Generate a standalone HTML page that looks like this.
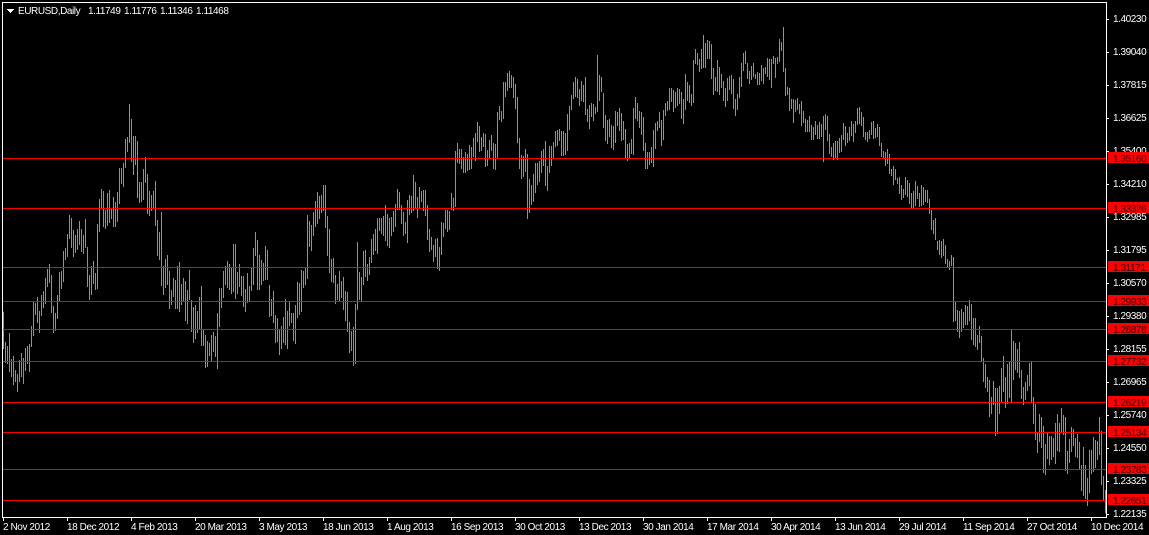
<!DOCTYPE html>
<html>
<head>
<meta charset="utf-8">
<title>EURUSD,Daily</title>
<style>
html,body{margin:0;padding:0;background:#000;width:1149px;height:535px;overflow:hidden}
svg{display:block;position:absolute;left:0;top:0}
text{font-family:"Liberation Sans",sans-serif;font-size:10px;letter-spacing:-.42px;fill:#fff}
.b{fill:none;stroke:#1fe31f;stroke-width:1;shape-rendering:crispEdges}
.r{fill:#f00;shape-rendering:crispEdges}
.w{fill:#fff;shape-rendering:crispEdges}
.t{fill:#3a0000}
</style>
</head>
<body>
<svg width="1149" height="535" viewBox="0 0 1149 535" xmlns="http://www.w3.org/2000/svg">
<rect width="1149" height="535" fill="#000"/>
<g class="b" transform="matrix(1 0 0 .33333 0 95)"><path d="M3.5 650V762M5.5 741V804M7.5 753V807M9.5 714V831M11.5 792V846M13.5 783V870M15.5 825V861M17.5 837V891M19.5 795V861M21.5 774V846M23.5 789V867M25.5 759V828M27.5 753V807M29.5 747V831M31.5 693V756M33.5 621V723M35.5 624V660M37.5 606V684M39.5 648V714M41.5 600V663M43.5 588V639M45.5 549V627M47.5 522V576M49.5 507V564M51.5 540V654M53.5 633V714M55.5 654V708M57.5 600V672M59.5 531V618M61.5 528V582M63.5 468V561M65.5 459V495M67.5 417V486M69.5 360V432M71.5 369V459M73.5 405V486M75.5 420V474M77.5 402V465M79.5 378V450M81.5 402V471M83.5 420V477M85.5 372V459M87.5 456V576M89.5 540V615M91.5 513V600M93.5 498V567M95.5 534V585M97.5 387V582M99.5 312V411M101.5 282V339M103.5 288V396M105.5 345V402M107.5 294V393M109.5 285V384M111.5 339V372M113.5 306V396M115.5 321V396M117.5 291V381M119.5 219V327M121.5 219V267M123.5 204V276M125.5 132V219M127.5 126V171M129.5 27V144M131.5 72V201M133.5 123V240M135.5 123V210M137.5 138V309M139.5 261V324M141.5 261V321M143.5 222V315M145.5 186V264M147.5 237V357M149.5 288V363M151.5 300V348M153.5 288V342M155.5 258V393M157.5 375V483M159.5 411V495M161.5 351V573M163.5 513V600M165.5 492V579M167.5 480V570M169.5 528V642M171.5 585V630M173.5 549V606M175.5 555V642M177.5 513V642M179.5 501V651M181.5 567V630M183.5 549V621"/></g>
<g class="b" transform="matrix(1 0 0 .33333 0 175)"><path d="M185.5 318V438M187.5 345V447M189.5 285V375M191.5 375V471M193.5 396V504M195.5 390V492M197.5 408V474M199.5 366V465M201.5 333V513M203.5 462V513M205.5 480V579M207.5 498V576M209.5 504V543M211.5 480V561M213.5 471V531M215.5 483V546M217.5 414V582M219.5 339V456M221.5 339V399M223.5 288V369M225.5 273V330M227.5 258V339M229.5 267V345M231.5 276V357M233.5 207V351M235.5 207V372M237.5 291V357M239.5 267V336M241.5 303V363M243.5 303V396M245.5 342V411M247.5 294V384M249.5 333V381M251.5 276V348M253.5 219V330M255.5 171V243M257.5 195V345M259.5 240V345M261.5 255V330M263.5 264V318M265.5 213V315M267.5 225V315M269.5 330V426M271.5 372V423M273.5 348V444M275.5 420V504M277.5 429V501M279.5 462V540M281.5 453V522M283.5 426V504M285.5 372V510M287.5 408V522M289.5 378V453M291.5 414V444M293.5 414V498M295.5 390V507M297.5 321V429M299.5 324V420M301.5 285V411M303.5 288V339M305.5 279V330M307.5 120V312M309.5 138V216M311.5 150V228M313.5 111V183M315.5 78V156M317.5 51V147M319.5 63V132M321.5 60V114M323.5 30V108M325.5 30V159M327.5 123V243M329.5 162V294M331.5 252V321M333.5 249V324M335.5 300V387M337.5 327V375M339.5 288V381M341.5 318V369M343.5 306V405M345.5 348V438M347.5 351V471M349.5 441V534M351.5 468V528M353.5 456V573M355.5 387V567M357.5 201V405M359.5 291V375M361.5 306V378M363.5 228V330M365.5 225V306M367.5 267V318M369.5 246V300"/></g>
<g class="b" transform="matrix(1 0 0 .33333 0 60)"><path d="M371.5 537V609M373.5 522V585M375.5 507V573M377.5 474V582M379.5 474V513M381.5 474V522M383.5 468V528M385.5 435V543M387.5 462V558M389.5 474V564M391.5 471V528M393.5 453V516M395.5 432V501M397.5 387V450M399.5 396V450M401.5 435V492M403.5 456V528M405.5 486V522M407.5 420V549M409.5 405V465M411.5 408V459M413.5 345V453M415.5 366V447M417.5 411V474M419.5 381V447M421.5 393V426M423.5 390V453M425.5 390V468M427.5 435V540M429.5 507V576M431.5 531V570M433.5 555V606M435.5 537V591M437.5 534V627M439.5 561V633M441.5 486V585M443.5 489V531M445.5 450V507M447.5 450V516M449.5 453V510M451.5 399V450M453.5 414V453M455.5 273V441M457.5 249V309M459.5 267V312M461.5 267V327M463.5 291V339M465.5 276V339M467.5 282V333M469.5 255V330M471.5 261V327M473.5 234V291M475.5 219V303M477.5 186V246M479.5 198V276M481.5 231V273M483.5 219V261M485.5 222V321M487.5 270V318M489.5 240V294M491.5 225V273M493.5 249V327M495.5 252V330M497.5 156V297M499.5 138V180M501.5 153V186M503.5 66V177M505.5 66V111M507.5 39V93M509.5 33V84M511.5 45V84M513.5 51V114M515.5 72V147M517.5 111V249M519.5 234V327M521.5 285V357M523.5 288V351M525.5 267V336M527.5 282V477M529.5 357V459M531.5 375V435M533.5 342V426M535.5 309V399M537.5 309V375M539.5 303V366M541.5 273V339M543.5 267V318M545.5 243V378M547.5 318V393M549.5 258V339M551.5 258V318M553.5 246V297"/></g>
<g class="b" transform="matrix(1 0 0 .33333 0 30)"><path d="M555.5 303V351M557.5 300V348M559.5 297V333M561.5 303V378M563.5 303V378M565.5 309V375M567.5 252V363M569.5 228V300M571.5 195V240M573.5 156V207M575.5 141V201M577.5 147V204M579.5 177V228M581.5 153V213M583.5 165V216M585.5 141V255M587.5 237V276M589.5 225V297M591.5 219V261M593.5 222V273M595.5 231V252M597.5 75V246M599.5 135V213M601.5 141V186M603.5 189V294M605.5 255V333M607.5 270V342M609.5 267V321M611.5 285V354M613.5 288V360M615.5 243V339M617.5 246V288M619.5 234V303M621.5 249V333M623.5 273V330M625.5 297V384M627.5 342V393M629.5 339V387M631.5 327V372M633.5 234V375M635.5 201V267M637.5 219V273M639.5 243V294M641.5 246V315M643.5 261V363M645.5 339V417M647.5 366V417M649.5 366V405M651.5 351V399M653.5 300V411M655.5 279V357M657.5 273V303M659.5 246V294M661.5 270V348M663.5 240V330M665.5 219V258M667.5 213V243M669.5 174V240M671.5 174V216M673.5 180V246M675.5 186V234M677.5 174V228M679.5 177V222M681.5 186V267M683.5 207V282M685.5 132V240M687.5 156V213M689.5 165V219M691.5 192V228M693.5 90V219M695.5 57V102M697.5 69V105M699.5 87V126M701.5 57V117M703.5 15V114M705.5 39V114M707.5 30V87M709.5 33V87M711.5 42V147M713.5 114V195M715.5 141V183M717.5 90V186M719.5 111V195M721.5 132V174M723.5 153V213M725.5 174V231M727.5 144V213M729.5 138V180M731.5 135V192M733.5 147V237M735.5 207V258M737.5 192V240M739.5 141V204"/></g>
<g class="b" transform="matrix(1 0 0 .33333 0 20)"><path d="M741.5 129V201M743.5 99V153M745.5 93V132M747.5 129V177M749.5 153V192M751.5 138V180M753.5 129V171M755.5 162V177M757.5 156V195M759.5 159V195M761.5 135V183M763.5 144V192M765.5 141V162M767.5 114V171M769.5 117V180M771.5 117V204M773.5 108V132M775.5 114V174M777.5 111V132M779.5 57V126M781.5 66V93M783.5 21V156M785.5 144V228M787.5 201V225M789.5 204V273M791.5 237V267M793.5 237V309M795.5 240V276M797.5 234V270M799.5 252V282M801.5 243V318M803.5 273V309M805.5 297V336M807.5 300V336M809.5 288V336M811.5 315V360M813.5 321V360M815.5 303V345M817.5 315V357M819.5 306V357M821.5 312V351M823.5 288V426M825.5 282V330M827.5 288V363M829.5 342V402M831.5 381V411M833.5 369V420M835.5 363V414M837.5 363V420M839.5 354V399M841.5 345V396M843.5 309V360M845.5 318V378M847.5 339V369M849.5 321V363M851.5 303V348M853.5 312V366M855.5 303V339M857.5 264V315M859.5 261V312M861.5 276V318M863.5 291V351M865.5 336V360M867.5 336V366M869.5 330V357M871.5 306V345M873.5 303V357M875.5 324V354M877.5 312V351M879.5 321V378M881.5 369V411M883.5 393V417M885.5 396V438M887.5 387V432M889.5 402V462M891.5 447V468M893.5 438V495M895.5 447V480M897.5 474V492M899.5 471V522M901.5 495V540M903.5 507V534M905.5 471V525M907.5 480V531M909.5 489V552M911.5 519V567M913.5 513V564M915.5 483V558M917.5 498V537M919.5 519V561M921.5 495V558M923.5 501V555"/></g>
<g class="b" transform="matrix(1 0 0 .33333 0 190)"><path d="M925.5 0V36M927.5 0V39M929.5 27V72M931.5 60V120M933.5 90V132M935.5 84V150M937.5 153V180M939.5 150V195M941.5 153V204M943.5 147V198M945.5 165V222M947.5 207V231M949.5 213V240M951.5 195V228M953.5 201V396M955.5 336V393M957.5 360V426M959.5 363V444M961.5 357V426M963.5 366V414M965.5 345V405M967.5 348V405M969.5 330V393M971.5 342V450M973.5 384V465M975.5 384V471M977.5 435V480M979.5 408V459M981.5 438V513M983.5 504V576M985.5 522V594M987.5 561V606M989.5 570V681M991.5 621V672M993.5 573V645M995.5 594V738M997.5 594V732M999.5 588V672M1001.5 534V639M1003.5 498V606M1005.5 561V654M1007.5 522V642M1009.5 516V624M1011.5 420V636M1013.5 453V570M1015.5 459V540M1017.5 477V549M1019.5 456V564M1021.5 540V627M1023.5 591V645M1025.5 576V630M1027.5 555V603M1029.5 519V588M1031.5 516V636M1033.5 621V702M1035.5 642V750M1037.5 726V789M1039.5 672V756M1041.5 681V774M1043.5 708V849M1045.5 762V855M1047.5 729V807M1049.5 738V825M1051.5 738V810M1053.5 744V801M1055.5 699V822M1057.5 672V783M1059.5 699V786M1061.5 654V726M1063.5 675V735M1065.5 681V843M1067.5 783V852M1069.5 747V819M1071.5 711V786M1073.5 717V768M1075.5 744V801M1077.5 732V804M1079.5 756V837M1081.5 825V903M1083.5 771V918M1085.5 825V927M1087.5 864V948M1089.5 780V909M1091.5 780V852M1093.5 741V846M1095.5 750V834M1097.5 753V810M1099.5 681V795M1101.5 723V885M1103.5 858V933M1105.5 900V970"/></g>

<!-- horizontal levels -->
<rect class="r" x="3" y="158" width="1103" height="1"/>
<rect class="r" x="3" y="208" width="1103" height="1"/>
<rect class="r" x="3" y="267" width="1103" height="1"/>
<rect class="r" x="3" y="301" width="1103" height="1"/>
<rect class="r" x="3" y="329" width="1103" height="1"/>
<rect class="r" x="3" y="361" width="1103" height="1"/>
<rect class="r" x="3" y="402" width="1103" height="1"/>
<rect class="r" x="3" y="432" width="1103" height="1"/>
<rect class="r" x="3" y="469" width="1103" height="1"/>
<rect class="r" x="3" y="500" width="1103" height="1"/>

<!-- frame -->
<rect class="w" x="2" y="2" width="1105" height="1"/>
<rect class="w" x="2" y="2" width="1" height="516"/>
<rect class="w" x="1106" y="2" width="1" height="516"/>
<rect class="w" x="2" y="517" width="1105" height="1"/>

<!-- price ticks -->
<path class="w" d="M1107 19h2v1h-2zM1107 52h2v1h-2zM1107 85h2v1h-2zM1107 118h2v1h-2zM1107 151h2v1h-2zM1107 184h2v1h-2zM1107 217h2v1h-2zM1107 250h2v1h-2zM1107 283h2v1h-2zM1107 316h2v1h-2zM1107 349h2v1h-2zM1107 382h2v1h-2zM1107 415h2v1h-2zM1107 448h2v1h-2zM1107 481h2v1h-2zM1107 514h2v1h-2z"/>

<!-- date ticks -->
<path class="w" d="M3 518h1v3h-1zM67 518h1v3h-1zM131 518h1v3h-1zM195 518h1v3h-1zM259 518h1v3h-1zM323 518h1v3h-1zM387 518h1v3h-1zM451 518h1v3h-1zM515 518h1v3h-1zM579 518h1v3h-1zM643 518h1v3h-1zM707 518h1v3h-1zM771 518h1v3h-1zM835 518h1v3h-1zM899 518h1v3h-1zM963 518h1v3h-1zM1027 518h1v3h-1zM1091 518h1v3h-1z"/>

<!-- legend -->
<path class="w" d="M7 9h7v1h-1v1h-1v1h-1v1h-1v-1h-1v-1h-1v-1h-1z"/>
<text x="18" y="14">EURUSD,Daily</text>
<text x="88" y="14">1.11749</text>
<text x="124" y="14">1.11776</text>
<text x="160" y="14">1.11346</text>
<text x="196" y="14">1.11468</text>

<!-- price labels -->
<text x="1113" y="22">1.40230</text>
<text x="1113" y="55">1.39040</text>
<text x="1113" y="88">1.37815</text>
<text x="1113" y="121">1.36625</text>
<text x="1113" y="154">1.35400</text>
<text x="1113" y="187">1.34210</text>
<text x="1113" y="220">1.32985</text>
<text x="1113" y="253">1.31795</text>
<text x="1113" y="286">1.30570</text>
<text x="1113" y="319">1.29380</text>
<text x="1113" y="352">1.28155</text>
<text x="1113" y="385">1.26965</text>
<text x="1113" y="418">1.25740</text>
<text x="1113" y="451">1.24550</text>
<text x="1113" y="484">1.23325</text>
<text x="1113" y="517">1.22135</text>

<!-- level tags -->
<rect class="r" x="1108" y="152" width="41" height="11"/>
<rect class="r" x="1108" y="202" width="41" height="11"/>
<rect class="r" x="1108" y="261" width="41" height="11"/>
<rect class="r" x="1108" y="295" width="41" height="11"/>
<rect class="r" x="1108" y="323" width="41" height="11"/>
<rect class="r" x="1108" y="355" width="41" height="11"/>
<rect class="r" x="1108" y="396" width="41" height="11"/>
<rect class="r" x="1108" y="426" width="41" height="11"/>
<rect class="r" x="1108" y="463" width="41" height="11"/>
<rect class="r" x="1108" y="494" width="41" height="11"/>
<text class="t" x="1113" y="162">1.35160</text>
<text class="t" x="1113" y="212">1.33326</text>
<text class="t" x="1113" y="271">1.31171</text>
<text class="t" x="1113" y="305">1.29933</text>
<text class="t" x="1113" y="333">1.28878</text>
<text class="t" x="1113" y="365">1.27732</text>
<text class="t" x="1113" y="406">1.26219</text>
<text class="t" x="1113" y="436">1.25134</text>
<text class="t" x="1113" y="473">1.23783</text>
<text class="t" x="1113" y="504">1.22651</text>

<!-- date labels -->
<text x="3" y="530">2 Nov 2012</text>
<text x="67" y="530">18 Dec 2012</text>
<text x="131" y="530">4 Feb 2013</text>
<text x="195" y="530">20 Mar 2013</text>
<text x="259" y="530">3 May 2013</text>
<text x="323" y="530">18 Jun 2013</text>
<text x="387" y="530">1 Aug 2013</text>
<text x="451" y="530">16 Sep 2013</text>
<text x="515" y="530">30 Oct 2013</text>
<text x="579" y="530">13 Dec 2013</text>
<text x="643" y="530">30 Jan 2014</text>
<text x="707" y="530">17 Mar 2014</text>
<text x="771" y="530">30 Apr 2014</text>
<text x="835" y="530">13 Jun 2014</text>
<text x="899" y="530">29 Jul 2014</text>
<text x="963" y="530">11 Sep 2014</text>
<text x="1027" y="530">27 Oct 2014</text>
<text x="1091" y="530">10 Dec 2014</text>
</svg>
</body>
</html>
